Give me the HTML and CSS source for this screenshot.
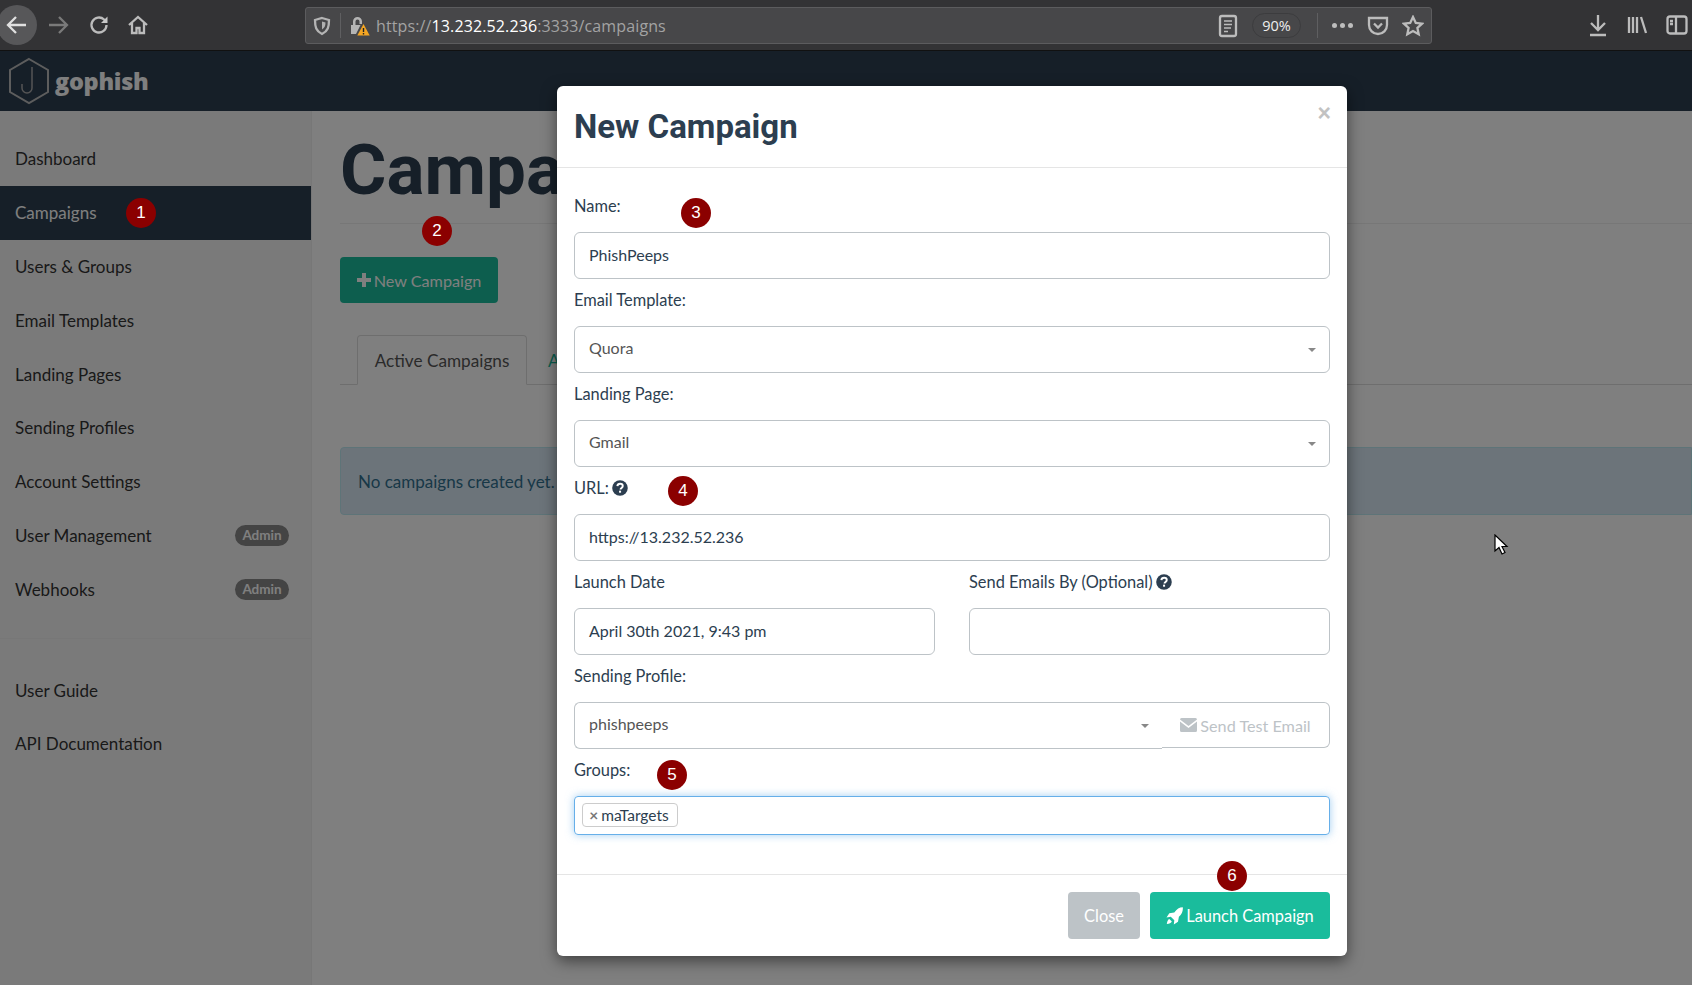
FILE: index.html
```html
<!DOCTYPE html>
<html lang="en">
<head>
<meta charset="utf-8">
<title>Gophish - Campaigns</title>
<link rel="stylesheet" href="styles.css">
</head>
<body>
<header class="chrome">
  <div class="nav-btns">
    <span class="back-btn"><svg width="24" height="24" viewBox="0 0 24 24" class="ic-light"><path d="M21 12H4M11 4l-8 8 8 8"/></svg></span>
    <svg class="fwd" width="24" height="24" viewBox="0 0 24 24"><path d="M3 12h17M13 4l8 8-8 8"/></svg>
    <svg class="tool reload" width="22" height="22" viewBox="0 0 22 22"><path d="M18.500 11a7.500 7.500 0 1 1-2.400-5.500L18 7.500"/><path d="M19.500 2.500V9H13z" fill="#c8c8c8" stroke="none"/></svg>
    <svg class="tool" width="22" height="22" viewBox="0 0 22 22"><path d="M2 11l9-8 9 8M5 9v10h4.500v-5h3v5H17V9"/></svg>
  </div>
  <div class="urlbar">
    <svg class="shield" width="18" height="20" viewBox="0 0 18 20"><path d="M9 2l7 2c0 7-1 11-7 14C3 15 2 11 2 4z"/><path d="M9 5.500l3.500 1c0 3-.6 5-3.500 7z" fill="#b0b0b0" stroke="none"/></svg>
    <span class="url-sep"></span>
    <svg class="lock" width="20" height="22" viewBox="0 0 20 22"><path d="M1 10h2V6.500a4.500 4.500 0 0 1 9 0V9H9.500V6.500a2 2 0 0 0-4 0V10h5L6 19H1z" fill="#b4b4b4"/><path d="M13.500 9l6.200 11.500H7.300z" fill="#f5a623"/><path d="M13.500 13v4M13.500 18v1.500" stroke="#222" stroke-width="1.400"/></svg>
    <span class="url"><span class="url-dim">https://</span><span class="url-host">13.232.52.236</span><span class="url-dim">:3333/campaigns</span></span>
    <svg class="tool reader" width="20" height="24" viewBox="0 0 20 24"><rect x="2" y="2" width="16" height="20" rx="2"/><path d="M6 7h8M6 10.500h8M6 14h7M6 17.500h4" stroke-width="1.500"/></svg>
    <span class="zoom-pill">90%</span>
    <span class="url-sep wide"></span>
    <span class="dots"><i></i><i></i><i></i></span>
    <svg class="tool" width="22" height="22" viewBox="0 0 22 22"><path d="M2 3h18v7a9 9 0 0 1-18 0z"/><path d="M7 8.500l4 4 4-4"/></svg>
    <svg class="tool" width="22" height="22" viewBox="0 0 22 22"><path d="M11 2l2.800 6 6.200.7-4.600 4.300 1.300 6.300L11 16.100l-5.700 3.200L6.600 13 2 8.700 8.200 8z"/></svg>
  </div>
  <div class="side-tools">
    <svg class="tool" width="22" height="24" viewBox="0 0 22 24"><path d="M11 2v15M4 10l7 7 7-7M3 22h16"/></svg>
    <svg class="tool" width="22" height="24" viewBox="0 0 22 24"><path d="M3 4v16M7 4v16M11 4v16M15 4l5 16"/></svg>
    <svg class="tool" width="24" height="24" viewBox="0 0 24 24"><rect x="2.500" y="3.500" width="19" height="17" rx="2.500"/><path d="M11 4v16M5 8h3M5 11h3"/></svg>
  </div>
</header>

<div class="page">
  <nav class="topnav">
    <svg class="logo" width="46" height="48" viewBox="0 0 46 48"><path class="logo-hex" d="M22 2l19 11v22L22 46 3 35V13z"/><path class="logo-hook" d="M25 10v21a5 5 0 0 1-10 0v-4"/></svg>
    <span class="brand">gophish</span>
  </nav>
  <div class="layout">
    <aside class="sidebar">
      <ul class="side-list">
        <li class="side-item">Dashboard</li>
        <li class="side-item is-active">Campaigns</li>
        <li class="side-item">Users &amp; Groups</li>
        <li class="side-item">Email Templates</li>
        <li class="side-item">Landing Pages</li>
        <li class="side-item">Sending Profiles</li>
        <li class="side-item">Account Settings</li>
        <li class="side-item">User Management <span class="admin">Admin</span></li>
        <li class="side-item">Webhooks <span class="admin">Admin</span></li>
      </ul>
      <hr class="side-rule">
      <ul class="side-list">
        <li class="side-item">User Guide</li>
        <li class="side-item">API Documentation</li>
      </ul>
    </aside>
    <main class="main">
      <h1 class="page-title">Campaigns</h1>
      <button class="btn-new"><svg class="fa" width="14" height="14" viewBox="0 0 14 14"><path d="M5 0h4v5h5v4H9v5H5V9H0V5h5z"/></svg>New Campaign</button>
      <div class="tabs">
        <span class="tab is-current">Active Campaigns</span>
        <span class="tab">Archived Campaigns</span>
      </div>
      <div class="alert">No campaigns created yet. Let's create one!</div>
    </main>
  </div>
</div>

<div class="backdrop"></div>

<section class="modal">
  <div class="modal-head">
    <h2 class="modal-title">New Campaign</h2>
    <span class="modal-x">×</span>
  </div>
  <div class="modal-body">
    <label class="lbl">Name:</label>
    <div class="field dark">PhishPeeps</div>
    <label class="lbl">Email Template:</label>
    <div class="field select">Quora<i class="caret"></i></div>
    <label class="lbl">Landing Page:</label>
    <div class="field select">Gmail<i class="caret"></i></div>
    <label class="lbl">URL: <svg class="help" width="16" height="16" viewBox="0 0 15 15"><circle cx="7.500" cy="7.500" r="7.300"/><path d="M5 5.700c.2-1.500 1.300-2.200 2.600-2.200 1.400 0 2.500.8 2.500 2.100 0 1.900-2.100 1.800-2.100 3.300" class="help-q"/><path d="M6.600 10h1.900v1.900H6.600z" fill="#fff"/></svg></label>
    <div class="field dark">https://13.232.52.236</div>
    <div class="two-col">
      <div>
        <label class="lbl">Launch Date</label>
        <div class="field dark">April 30th 2021, 9:43 pm</div>
      </div>
      <div>
        <label class="lbl">Send Emails By (Optional) <svg class="help" width="16" height="16" viewBox="0 0 15 15"><circle cx="7.500" cy="7.500" r="7.300"/><path d="M5 5.700c.2-1.500 1.300-2.200 2.600-2.200 1.400 0 2.500.8 2.500 2.100 0 1.900-2.100 1.800-2.100 3.300" class="help-q"/><path d="M6.600 10h1.900v1.900H6.600z" fill="#fff"/></svg></label>
        <div class="field"></div>
      </div>
    </div>
    <label class="lbl">Sending Profile:</label>
    <div class="input-group">
      <div class="field select grow">phishpeeps<i class="caret"></i></div>
      <span class="test-btn"><svg class="fa" width="17" height="14" viewBox="0 0 17 14"><path d="M0 1.500A1.500 1.500 0 0 1 1.500 0h14A1.500 1.500 0 0 1 17 1.500L8.500 8 0 1.500z"/><path d="M0 3.500l8.500 6.500L17 3.500v9a1.500 1.500 0 0 1-1.500 1.500h-14A1.500 1.500 0 0 1 0 12.500z"/></svg>Send Test Email</span>
    </div>
    <label class="lbl">Groups:</label>
    <div class="tag-box"><span class="tag"><b class="tag-x">×</b> maTargets</span></div>
  </div>
  <div class="modal-foot">
    <button class="btn-close">Close</button>
    <button class="btn-launch"><svg class="fa" width="17" height="18" viewBox="0 0 17 18"><path d="M16.800.2c.4 3.800-.9 7-3.900 9.500l-.9 5-4.200 2.800.5-4.300-3.500-3.500-4.300.9L3.300 6.200l5-.7C10.800 2.100 13.300.2 16.800.2z"/><path d="M3.300 12c-1.300.5-2.200 2.300-2.500 5 2.600-.3 4.300-1.200 5-2.600z"/></svg>Launch Campaign</button>
  </div>
</section>

<span class="step step-1">1</span>
<span class="step step-2">2</span>
<span class="step step-3">3</span>
<span class="step step-4">4</span>
<span class="step step-5">5</span>
<span class="step step-6">6</span>

<svg class="cursor" width="16" height="22" viewBox="0 0 16 22"><path d="M1 1v16l4-3.500 3 6.500 3-1.500-3-6h5z"/></svg>
</body>
</html>
```
FILE: styles.css
```css
* { box-sizing: border-box; }
html, body { margin: 0; padding: 0; height: 100%; overflow: hidden; }
body { font-family: "Lato", "Noto Sans", sans-serif; font-size: 17px; color: #2c3e50; background: #fff; position: relative; }

.chrome { height: 51px; background: #333335; border-bottom: 1px solid #111; display: flex; align-items: center; }
.nav-btns { width: 308px; display: flex; align-items: center; gap: 15px; margin-left: -3px; flex: none; }
.back-btn { width: 40px; height: 40px; border-radius: 50%; background: #575759; display: flex; align-items: center; justify-content: center; margin-right: -6px; }
.nav-btns svg, .urlbar svg, .side-tools svg { fill: none; stroke-width: 2.300; }
.ic-light { stroke: #e0e0e0; }
.fwd { stroke: #7a7a7a; margin-right: 3px; }
.reload { margin-right: 2px; }
.tool { stroke: #bcbcbc; }
.urlbar { width: 1127px; height: 37px; margin-top: 1px; background: #474749; border: 1px solid #5c5c5e; border-radius: 3px; display: flex; align-items: center; padding: 0 7px 0 7px; flex: none; }
.shield { stroke: #b4b4b4; }
.url-sep { width: 1px; height: 25px; background: #5f5f61; margin: 0 9px 0 9px; flex: none; }
.url-sep.wide { margin: 0 14px 0 16px; }
.urlbar .lock { stroke: none; margin-right: 6px; }
.url { font-family: "Open Sans", sans-serif; font-size: 16px; flex: 1; letter-spacing: 0.12px; }
.url-dim { color: #a3a3a3; }
.url-host { color: #fff; }
.reader { margin-right: 14px; }
.zoom-pill { width: 49px; height: 25px; border: 1px solid #3c3c3e; border-radius: 13px; color: #eee; font-family: "Open Sans", sans-serif; font-size: 14.500px; display: flex; align-items: center; justify-content: center; }
.dots { display: flex; gap: 3px; margin-right: 14px; }
.dots i { width: 5px; height: 5px; border-radius: 50%; background: #bdbdbd; }
.urlbar .tool + .tool { margin-left: 13px; }
.side-tools { margin-left: auto; display: flex; align-items: center; gap: 17px; padding-right: 3px; }

.page { height: 934px; display: flex; flex-direction: column; overflow: hidden; }
.topnav { height: 60px; background: #2c3e50; display: flex; align-items: center; padding-left: 7px; flex: none; }
.logo { fill: none; }
.logo-hex { stroke: #bbb; stroke-width: 2; }
.logo-hook { stroke: #aaa; stroke-width: 1.500; }
.brand { color: #fff; font-family: "Open Sans", sans-serif; font-weight: 800; font-size: 23.500px; margin-left: 2px; letter-spacing: -0.3px; }
.layout { flex: 1; display: flex; min-height: 0; }
.sidebar { width: 312px; background: #f5f5f5; border-right: 1px solid #eee; padding-top: 21px; flex: none; }
.side-list { list-style: none; margin: 0; padding: 0; }
.side-item { height: 53.800px; display: flex; align-items: center; justify-content: space-between; padding: 0 22px 0 15px; color: #333; font-size: 17px; }
.side-item.is-active { background: #2c3e50; color: #fff; }
.admin { background: #888; color: #fff; font-weight: 700; font-size: 13.500px; height: 21px; width: 54px; border-radius: 11px; display: flex; align-items: center; justify-content: center; }
.side-rule { border: 0; border-top: 1px solid #eee; margin: 22px 0 24px; }

.main { flex: 1; padding: 0 0 0 28px; min-width: 0; }
.page-title { font-family: Roboto, sans-serif; font-weight: 700; font-size: 71px; line-height: 80px; margin: 19px 0 0; height: 94px; border-bottom: 1px solid #eee; color: #2c3e50; }
.btn-new { margin-top: 33px; width: 158px; height: 46px; background: #1abc9c; color: #fff; border: 0; border-radius: 4px; font: 16.200px "Lato", sans-serif; display: flex; align-items: center; justify-content: center; padding: 0; }
.fa { fill: currentColor; margin-right: 3px; flex: none; }
.tabs { margin-top: 32px; height: 50px; border-bottom: 1px solid #ddd; padding-left: 17px; display: flex; }
.tab { height: 50px; padding: 0 17px; display: flex; align-items: center; color: #1abc9c; font-size: 17.200px; white-space: nowrap; }
.tab.is-current { width: 170px; padding: 0; justify-content: center; color: #555; background: #fff; border: 1px solid #ddd; border-bottom-color: #fff; border-radius: 4px 4px 0 0; margin-right: 4px; }
.alert { margin-top: 62px; height: 68px; background: #d9e9f5; border: 1px solid #bce8f1; border-radius: 4px 0 0 4px; color: #31708f; padding-left: 17px; display: flex; align-items: center; font-size: 17px; }

.backdrop { position: absolute; inset: 51px 0 0 0; background: rgba(0, 0, 0, 0.5); }

.modal { position: absolute; left: 557px; top: 86px; width: 790px; height: 870px; background: #fff; border-radius: 6px; box-shadow: 0 5px 15px rgba(0, 0, 0, 0.5); display: flex; flex-direction: column; }
.modal-head { height: 82px; border-bottom: 1px solid #e5e5e5; padding: 0 17px; position: relative; display: flex; align-items: center; flex: none; }
.modal-title { font-family: Roboto, sans-serif; font-weight: 700; font-size: 33px; margin: 0; color: #2c3e50; }
.modal-x { position: absolute; right: 16px; top: 14px; font-family: "Liberation Sans", sans-serif; font-weight: 700; font-size: 23px; color: #c2c2c2; }
.modal-body { padding: 17px 17px 0; flex: 1; }
.lbl { display: block; height: 47px; padding-top: 9px; line-height: 24px; color: #2c3e50; font-size: 16.400px; }
.help { fill: #2c3e50; vertical-align: -2px; margin-left: -1px; }
.help-q { fill: none; stroke: #fff; stroke-width: 1.800; }
.field { height: 47px; border: 1px solid #bdc3c7; border-radius: 6px; display: flex; align-items: center; padding: 0 14px 2px; color: #2c3e50; font-size: 16px; background: #fff; position: relative; }
.select { color: #555; padding-bottom: 5px; }
.caret { position: absolute; right: 13px; top: 21px; width: 0; height: 0; border-left: 4px solid transparent; border-right: 4px solid transparent; border-top: 4px solid #888; }
.two-col { display: grid; grid-template-columns: 361px 361px; gap: 34px; }
.input-group { display: flex; align-items: flex-start; }
.grow { flex: 1; border-radius: 6px 0 0 6px; border-right: 0; }
.test-btn { width: 168px; height: 46px; border: 1px solid #bdc3c7; border-left: 0; border-radius: 0 6px 6px 0; color: #bdc3c7; font-size: 16.200px; display: flex; align-items: center; justify-content: center; }
.tag-box { height: 39px; border: 1px solid #66afe9; border-radius: 4px; box-shadow: 0 0 8px rgba(102, 175, 233, 0.6); padding: 6px 7px; display: flex; align-items: flex-start; }
.tag { height: 24px; width: 96px; border: 1px solid #ccc; border-radius: 4px; font-size: 15.500px; color: #2c3e50; display: flex; align-items: center; justify-content: center; gap: 3px; white-space: nowrap; }
.tag-x { color: #777; font-weight: 700; margin-left: -2px; }
.modal-foot { height: 82px; border-top: 1px solid #e5e5e5; display: flex; justify-content: flex-end; align-items: flex-start; gap: 10px; padding: 17px 17px 0; flex: none; }
.btn-close, .btn-launch { border: 0; border-radius: 4px; height: 47px; color: #fff; font: 16.400px "Lato", sans-serif; display: flex; align-items: center; justify-content: center; padding: 0; }
.btn-close { width: 72px; background: #bdc3c7; }
.btn-launch { width: 180px; background: #1abc9c; }

.step { position: absolute; width: 30px; height: 30px; border-radius: 50%; background: #8b0000; color: #fff; font-family: "Liberation Sans", sans-serif; font-size: 17px; display: flex; align-items: center; justify-content: center; }
.step-1 { left: 126px; top: 198px; }
.step-2 { left: 422px; top: 216px; }
.step-3 { left: 681px; top: 198px; }
.step-4 { left: 668px; top: 476px; }
.step-5 { left: 657px; top: 760px; }
.step-6 { left: 1217px; top: 861px; }
.cursor { position: absolute; left: 1494px; top: 534px; fill: #fff; stroke: #000; stroke-width: 1.200; }
```
